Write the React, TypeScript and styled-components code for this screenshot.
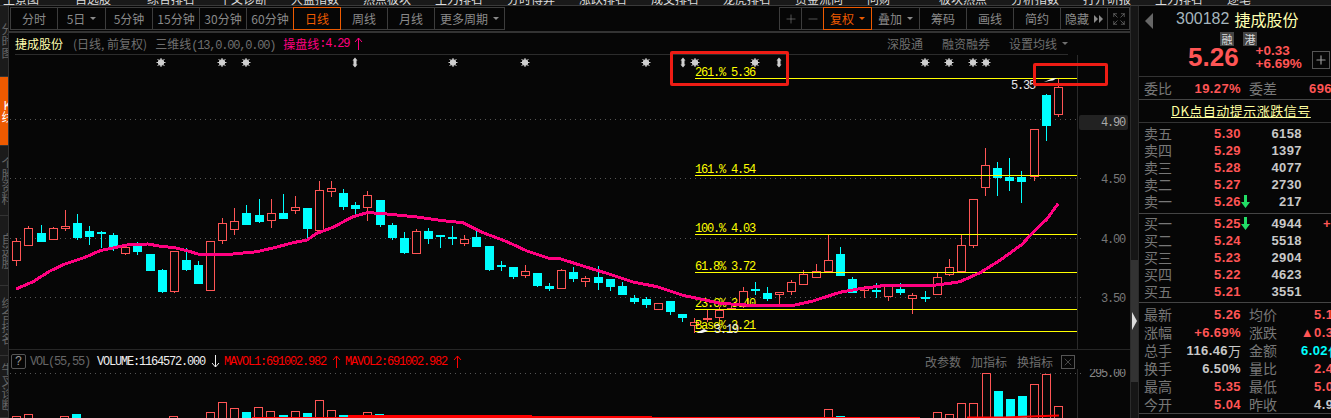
import React from 'react';
import styled, { createGlobalStyle } from 'styled-components';
import { Expand, Minus, Plus, X } from 'lucide-react';

const CJK = '"Noto Sans CJK SC", "Liberation Sans", sans-serif';
const NUM = '"Liberation Sans", "Noto Sans CJK SC", sans-serif';
const MONO = '"Liberation Mono", "Noto Sans CJK SC", monospace';

const RED = '#ff5555';
const CYAN = '#00ffff';
const PINK = '#ff0080';
const YELLOW = '#ffff00';

const GlobalStyle = createGlobalStyle`
  html, body {
    margin: 0;
    padding: 0;
    background: #060606;
  }
`;

const Screen = styled.div`
  position: relative;
  width: 1331px;
  height: 418px;
  overflow: hidden;
  background: #060606;
  font-family: ${CJK};
  color: #888;
`;

const TopMenu = styled.div`
  display: flex;
  align-items: flex-end;
  height: 5px;
  padding-left: 3px;
  overflow: hidden;
  background: #191919;
  border-bottom: 1px solid #3a3a3a;
`;

const TopMenuItem = styled.span`
  flex: none;
  width: 72px;
  font-size: 12px;
  line-height: 12px;
  color: #ddd;
  white-space: nowrap;
`;

const Body = styled.div`
  display: flex;
  height: 412px;
`;

const Rail = styled.div`
  flex: none;
  display: flex;
  flex-direction: column;
  width: 8px;
  overflow: hidden;
  background: #1b1b1b;
  border-right: 1px solid #333;
`;

const RailTab = styled.div<{ $active?: boolean; $h: number }>`
  flex: none;
  display: flex;
  align-items: center;
  justify-content: center;
  width: 14px;
  height: ${(p) => p.$h}px;
  overflow: hidden;
  box-sizing: border-box;
  background: ${(p) => (p.$active ? '#ee5a00' : 'transparent')};
  border-bottom: 1px solid #333;
  color: ${(p) => (p.$active ? '#fff' : '#666')};
  font-size: 12px;
  line-height: 12px;
  writing-mode: vertical-rl;
  text-orientation: upright;
`;

const Main = styled.div`
  flex: none;
  display: flex;
  flex-direction: column;
  width: 1121px;
`;

const Toolbar = styled.div`
  display: flex;
  box-sizing: border-box;
  height: 27px;
  padding: 1px 0 1px 1px;
  border-bottom: 2px solid #333;
`;

const ToolGroup = styled.div<{ $push?: boolean }>`
  display: flex;
  margin-left: ${(p) => (p.$push ? 'auto' : '0')};
`;

const ToolButton = styled.div<{ $w: number; $active?: boolean }>`
  flex: none;
  display: flex;
  align-items: center;
  justify-content: center;
  gap: 5px;
  box-sizing: border-box;
  width: ${(p) => p.$w}px;
  height: 23px;
  margin-left: -1px;
  border: 1px solid ${(p) => (p.$active ? '#ee5a00' : '#3c3c3c')};
  color: ${(p) => (p.$active ? '#ee5a00' : '#8a8a8a')};
  font-size: 12px;
  position: relative;
  z-index: ${(p) => (p.$active ? 1 : 0)};
  &:first-child {
    margin-left: 0;
  }
`;

const Caret = styled.i<{ $c?: string }>`
  display: block;
  width: 0;
  height: 0;
  border-left: 3px solid transparent;
  border-right: 3px solid transparent;
  border-top: 3px solid ${(p) => p.$c ?? '#8a8a8a'};
`;

const ChartHead = styled.div`
  display: flex;
  align-items: center;
  height: 22px;
  box-sizing: border-box;
  margin: 0 62px 0 6px;
  border-bottom: 1px solid #2c2c2c;
  font-size: 12px;
  white-space: nowrap;
`;

const StockName = styled.span`
  color: #ffffb0;
  margin-right: 10px;
`;

const HeadNote = styled.span`
  color: #6f6f6f;
  margin-right: 8px;
`;

const MonoNote = styled.span`
  font-family: ${MONO};
  letter-spacing: -1.2px;
  font-size: 12px;
`;

const HeadSignal = styled.span`
  display: flex;
  align-items: center;
  color: ${PINK};
  svg {
    margin-left: 5px;
  }
`;

const HeadLinks = styled.div`
  display: flex;
  align-items: center;
  margin-left: auto;
  gap: 19px;
  color: #6f6f6f;
`;

const LinkCaret = styled.span`
  display: flex;
  align-items: center;
  gap: 5px;
`;

const ChartSvg = styled.svg`
  display: block;
  flex: none;
`;

const ChartText = styled.text<{ $c: string }>`
  fill: ${(p) => p.$c};
  font-family: ${MONO};
  font-size: 12px;
  letter-spacing: -1.2px;
`;

const VolHead = styled.div`
  display: flex;
  align-items: center;
  height: 20px;
  box-sizing: border-box;
  padding: 4px 0 0 2px;
  border-top: 1px solid #262626;
  font-size: 12px;
  white-space: nowrap;
`;

const HelpBox = styled.span`
  display: flex;
  align-items: center;
  justify-content: center;
  box-sizing: border-box;
  width: 15px;
  height: 15px;
  margin-right: 4px;
  border: 1px solid #555;
  border-radius: 2px;
  font-family: ${MONO};
  color: #999;
`;

const VolText = styled.span<{ $c: string; $gap?: number }>`
  display: flex;
  align-items: center;
  gap: 6px;
  margin-right: ${(p) => p.$gap ?? 4}px;
  color: ${(p) => p.$c};
  font-family: ${MONO};
  font-size: 12px;
  letter-spacing: -1.2px;
`;

const VolLinks = styled.div`
  display: flex;
  align-items: center;
  gap: 10px;
  margin-left: auto;
  margin-right: 55px;
  color: #6f6f6f;
`;

const CloseBox = styled.span`
  display: flex;
  align-items: center;
  justify-content: center;
  box-sizing: border-box;
  width: 14px;
  height: 14px;
  margin-left: -2px;
  border: 1px solid #555;
  color: #888;
`;

const ScrollStrip = styled.div`
  flex: none;
  width: 7px;
  padding-top: 254px;
  background: #161616;
  border-left: 1px solid #2b2b2b;
  border-right: 1px solid #2b2b2b;
`;

const ScrollThumb = styled.div`
  display: flex;
  align-items: center;
  justify-content: center;
  height: 122px;
  background: #333;
`;

const ScrollArrow = styled.i`
  display: block;
  width: 0;
  height: 0;
  border-top: 9px solid transparent;
  border-bottom: 9px solid transparent;
  border-left: 5px solid #ddd;
`;

const Quote = styled.div`
  flex: none;
  width: 192px;
  overflow: hidden;
  font-family: ${NUM};
`;

const QuoteHead = styled.div`
  height: 71px;
  box-sizing: border-box;
  border-bottom: 1px solid #333;
`;

const CodeRow = styled.div`
  display: flex;
  align-items: center;
  height: 26px;
  padding-left: 6px;
`;

const BackArrow = styled.i`
  display: block;
  width: 0;
  height: 0;
  margin: 4px 23px 0 0;
  border-top: 8px solid transparent;
  border-bottom: 8px solid transparent;
  border-right: 8px solid #666;
`;

const Code = styled.span`
  font-size: 16px;
  color: #a5b5bd;
  margin-right: 5px;
`;

const QuoteName = styled.span`
  font-family: ${CJK};
  font-size: 16px;
  color: #ffffb0;
`;

const BadgeRow = styled.div`
  display: flex;
  gap: 9px;
  height: 15px;
  padding-left: 81px;
`;

const Badge = styled.span`
  display: flex;
  align-items: center;
  justify-content: center;
  width: 14px;
  height: 14px;
  background: #444;
  color: #ddd;
  font-family: ${CJK};
  font-size: 11px;
`;

const PriceRow = styled.div`
  display: flex;
  align-items: center;
  height: 20px;
  padding-left: 49px;
`;

const Price = styled.span`
  font-size: 26px;
  font-weight: bold;
  color: ${RED};
  margin-right: 17px;
`;

const Change = styled.div`
  font-size: 13.5px;
  font-weight: bold;
  line-height: 13px;
  color: ${RED};
`;

const PlusBox = styled.span`
  display: flex;
  align-items: center;
  justify-content: center;
  width: 16px;
  height: 16px;
  margin: 5px 1px 0 auto;
  border: 1px solid #555;
  color: #999;
`;

const Section = styled.div<{ $pt: number; $pb: number }>`
  box-sizing: border-box;
  padding: ${(p) => p.$pt}px 0 ${(p) => p.$pb}px 5px;
  border-bottom: 1px solid #444;
`;

const StatRow = styled.div<{ $h: number }>`
  display: grid;
  grid-template-columns: 44px 53px 8px 44px 48px;
  align-items: center;
  height: ${(p) => p.$h}px;
  white-space: nowrap;
`;

const BookRow = styled.div`
  display: grid;
  grid-template-columns: 44px 53px 14px 47px auto;
  align-items: center;
  height: 17px;
  white-space: nowrap;
`;

const Label = styled.span<{ $col?: number }>`
  grid-column: ${(p) => p.$col ?? 1};
  font-family: ${CJK};
  font-size: 14px;
  color: #777;
  line-height: 17px;
`;

const Value = styled.span<{ $c?: string; $col?: number; $inset?: number }>`
  grid-column: ${(p) => p.$col ?? 'auto'};
  justify-self: end;
  display: flex;
  align-items: center;
  margin-right: ${(p) => p.$inset ?? 0}px;
  font-size: 13px;
  font-weight: bold;
  letter-spacing: 0.4px;
  line-height: 17px;
  color: ${(p) => p.$c ?? '#c8c8c8'};
`;

const UnitGlyph = styled.span`
  font-family: ${CJK};
  font-weight: normal;
  font-size: 13px;
  letter-spacing: 0;
`;

const DkRow = styled.div`
  height: 23px;
  box-sizing: border-box;
  padding: 3px 0 0 32px;
  border-bottom: 1px solid #333;
  font-family: ${CJK};
  font-size: 13px;
  letter-spacing: 0.5px;
  line-height: 16px;
  color: #ffffa0;
  text-decoration: underline;
`;

const RedBox = styled.div<{ $x: number; $y: number; $w: number; $h: number }>`
  position: absolute;
  left: ${(p) => p.$x}px;
  top: ${(p) => p.$y}px;
  width: ${(p) => p.$w}px;
  height: ${(p) => p.$h}px;
  box-sizing: border-box;
  border: 3px solid #ee1c14;
  border-radius: 2px;
`;

// [kind, body top, body bottom, wick top, wick bottom], page coords
const candles: [string, number, number, number, number][] = [
  ['r', 241, 259.5, 238, 266], ['r', 228, 244.5, 226, 244.5], ['c', 233, 242, 225, 242], ['r', 228, 238.5, 227, 238.5],
  ['r', 226, 228, 210, 231], ['c', 223, 238, 214, 240], ['c', 231, 237, 226, 245], ['c', 232, 234, 231, 248],
  ['c', 235, 249, 233, 251], ['r', 247, 253, 247, 255], ['c', 246, 252, 242, 255], ['c', 254, 271, 254, 271],
  ['c', 270, 292, 269, 293], ['r', 251, 290.5, 251, 293], ['c', 260, 270, 248, 271], ['c', 265, 284, 261, 284],
  ['r', 241, 290, 241, 291], ['r', 223, 240, 218, 244], ['r', 221, 229, 208, 235], ['c', 213, 225, 205, 225],
  ['c', 215, 222, 199, 223], ['r', 213, 220, 199, 228], ['c', 213, 219, 194, 219], ['r', 207, 210, 196, 214],
  ['c', 208, 229, 208, 238], ['r', 190, 230, 181, 230], ['r', 188, 191, 181, 197], ['c', 193, 207, 189, 210],
  ['c', 205, 209, 202, 215], ['r', 195, 207, 191, 221], ['c', 200, 225, 200, 227], ['c', 225, 238, 223, 240],
  ['c', 238, 253, 232, 254], ['r', 231, 253, 229, 253], ['c', 231, 239, 228, 244], ['c', 235, 237, 235, 248],
  ['c', 237, 239, 226, 245], ['r', 239, 243, 235, 246], ['c', 237, 247, 231, 247], ['c', 246, 270, 246, 271],
  ['c', 265, 267, 261, 271], ['c', 267, 277, 267, 279], ['r', 271, 275, 265, 278], ['c', 273, 286, 273, 287],
  ['c', 286, 289, 283, 291], ['r', 270, 288, 269, 289], ['c', 272, 279, 267, 282], ['r', 278, 281, 276, 287],
  ['c', 277, 283, 266, 290], ['c', 279, 287, 279, 291], ['c', 286, 295, 282, 295], ['c', 298, 302, 295, 304],
  ['c', 299, 305, 297, 308], ['r', 303, 309, 303, 309], ['c', 301, 312, 301, 315], ['c', 314, 318, 314, 322],
  ['r', 322, 325, 318, 333], ['r', 318, 319, 310, 322], ['r', 310, 317, 307, 321], ['r', 308, 309, 303, 310],
  ['r', 291, 306, 287, 308], ['c', 289, 291, 282, 295], ['c', 293, 299, 287, 301], ['r', 292, 294, 292, 304],
  ['r', 282, 291, 280, 295], ['r', 274, 284, 270, 284], ['r', 271, 277, 264, 277], ['r', 260, 271, 234, 272],
  ['c', 254, 276, 247, 276], ['c', 279, 293, 277, 293], ['r', 288, 290, 286, 298], ['c', 290, 292, 283, 298],
  ['r', 285, 296, 285, 301], ['c', 289, 293, 283, 295], ['r', 295, 298, 293, 314], ['c', 297, 298, 291, 302],
  ['r', 277, 294, 273, 295], ['r', 267, 274, 259, 276], ['r', 245, 271, 235, 272], ['r', 199, 245, 199, 248],
  ['r', 165, 187, 148, 196], ['c', 168, 178, 162, 196], ['c', 177, 181, 158, 191], ['c', 177, 182, 171, 203],
  ['r', 129, 176, 129, 181], ['c', 95, 126, 94, 141], ['r', 87, 114, 79, 117],
];

const candleX = (i: number) => Math.round(16.3 + 12.11 * i);

const maLine =
  '16,289 33,281.7 50,271 65,264 85,257.3 100,250.7 113,248 130,244.3 148,244 163,246.7 173,247.3 187,250.7 198,254 233,254 257,251.7 277,247 293,242.7 307,240 317,233.3 333,227.3 353,216.7 367,212.7 380,213.3 400,215.3 417,217 443,220.7 463,222.7 483,232.7 507,241.7 527,251 550,258.7 560,258.7 587,267.3 607,273.3 633,282 657,286.7 683,295.3 720,303.3 757,305.7 792,305.7 813,301 840,292.3 860,288.7 883,285.7 930,285.7 947,283.7 960,281.7 980,272.7 1000,260.3 1022,244.3 1033,232.3 1047,219 1058,203.7';

const fiboLevels = [
  { y: 78, text: '261.% 5.36' },
  { y: 175, text: '161.% 4.54' },
  { y: 234, text: '100.% 4.03' },
  { y: 272, text: '61.8% 3.72' },
  { y: 309, text: '23.6% 3.40' },
  { y: 331, text: 'Base% 3.21' },
];

const stars = [161, 222, 246, 453, 525, 646, 695, 755, 925, 949, 973, 986];
const updowns = [355, 683, 779];

const axisLabels = [
  { y: 178.5, text: '4.50' },
  { y: 238.5, text: '4.00' },
  { y: 297.5, text: '3.50' },
];

// [x, top, colour]
const volBars: [number, number, string][] = [
  [16, 416, 'r'], [28, 414, 'r'], [64, 416, 'r'], [76, 414, 'c'], [173, 416, 'r'], [210, 412, 'r'], [222, 402, 'r'],
  [234, 408, 'r'], [246, 412, 'c'], [258, 407, 'r'], [270, 411, 'r'], [283, 415, 'c'], [295, 411, 'r'], [307, 413, 'c'],
  [319, 400, 'r'], [331, 410, 'r'], [343, 415, 'c'], [367, 412, 'r'], [379, 414, 'c'], [828, 409, 'r'], [840, 416, 'c'],
  [937, 412, 'r'], [949, 414, 'r'], [961, 403, 'r'], [973, 403, 'r'], [986, 373, 'r'], [998, 391, 'c'], [1010, 399, 'c'],
  [1022, 396, 'c'], [1034, 384, 'r'], [1046, 374, 'r'], [1058, 406, 'r'],
];

const Star: React.FC<{ x: number; y: number }> = ({ x, y }) => (
  <g stroke="#cfcfcf" strokeWidth="1">
    <circle cx={x} cy={y} r="2.8" fill="#cfcfcf" />
    <line x1={x - 4.5} y1={y} x2={x + 4.5} y2={y} />
    <line x1={x} y1={y - 4.5} x2={x} y2={y + 4.5} />
    <line x1={x - 3.5} y1={y - 3.5} x2={x + 3.5} y2={y + 3.5} />
    <line x1={x - 3.5} y1={y + 3.5} x2={x + 3.5} y2={y - 3.5} />
  </g>
);

const UpDown: React.FC<{ x: number; y: number }> = ({ x, y }) => (
  <path
    d={`M${x} ${y - 5} L${x + 2.5} ${y - 2} L${x + 1.5} ${y - 2} L${x + 1.5} ${y + 2} L${x + 2.5} ${y + 2} L${x} ${y + 5} L${x - 2.5} ${y + 2} L${x - 1.5} ${y + 2} L${x - 1.5} ${y - 2} L${x - 2.5} ${y - 2} Z`}
    fill="#cfcfcf"
  />
);

const ThinArrow: React.FC<{ color: string; down?: boolean }> = ({ color, down }) => (
  <svg width="9" height="13" viewBox="0 0 9 13" fill="none" stroke={color} strokeWidth="1">
    {down ? <path d="M4.5 0V12M1 8L4.5 12L8 8" /> : <path d="M4.5 1V13M1 5L4.5 1L8 5" />}
  </svg>
);

const GreenDown: React.FC = () => (
  <svg width="9" height="13" viewBox="0 0 9 13">
    <path d="M3 0H6V7H9L4.5 13L0 7H3Z" fill="#22dd66" />
  </svg>
);

const SkipRight: React.FC = () => (
  <svg width="9" height="8" viewBox="0 0 9 8" fill="#8a8a8a">
    <path d="M0 0L4 4L0 8ZM5 0L9 4L5 8Z" />
  </svg>
);

const MainChart: React.FC = () => (
  <ChartSvg width="1121" height="294" viewBox="9 55 1121 294">
    <g stroke="#555" strokeWidth="1" strokeDasharray="1 4">
      {[119.5, 178.5, 238.5, 297.5].map((y) => (
        <line key={y} x1="10" y1={y} x2="1081" y2={y} />
      ))}
    </g>
    <line x1="1077.5" y1="55" x2="1077.5" y2="349" stroke="#2a2a2a" />
    <rect x="1079" y="115" width="49" height="15" rx="2" fill="#222" />
    <ChartText $c="#aaa" x="1101" y="126">4.90</ChartText>
    {axisLabels.map((a) => (
      <ChartText key={a.y} $c="#777" x="1101" y={a.y + 4}>{a.text}</ChartText>
    ))}

    {stars.map((x) => (
      <Star key={x} x={x} y={62.5} />
    ))}
    {updowns.map((x) => (
      <UpDown key={x} x={x} y={62.5} />
    ))}

    <g shapeRendering="crispEdges">
      {candles.map(([kind, top, bot, wickTop, wickBot], i) => {
        const x = candleX(i);
        const color = kind === 'r' ? RED : CYAN;
        return (
          <g key={i}>
            <line x1={x + 0.5} y1={wickTop} x2={x + 0.5} y2={wickBot} stroke={color} />
            {kind === 'r' ? (
              <rect x={x - 3.5} y={Math.round(top) + 0.5} width="8" height={Math.max(Math.round(bot - top), 1)} fill="#060606" stroke={color} />
            ) : (
              <rect x={x - 4} y={top} width="9" height={Math.max(bot - top, 2)} fill={color} />
            )}
          </g>
        );
      })}
    </g>

    {fiboLevels.map((f) => (
      <g key={f.y}>
        <line x1="695" y1={f.y + 0.5} x2="1077" y2={f.y + 0.5} stroke={YELLOW} shapeRendering="crispEdges" />
        <ChartText $c={YELLOW} x="695" y={f.y - 2}>{f.text}</ChartText>
      </g>
    ))}

    <polyline points={maLine} fill="none" stroke={PINK} strokeWidth="3" shapeRendering="crispEdges" />

    <ChartText $c="#e8e8e8" x="1011" y="89">5.35</ChartText>
    <path d="M1044 82L1052 78.5L1057 78L1053 80.5L1049 81Z" fill="#f4f4f4" />
    <ChartText $c="#e8e8e8" x="714" y="333">3.19</ChartText>
    <path d="M696 333L704 329L708 331L702 333Z" fill="#f4f4f4" />
  </ChartSvg>
);

const VolChart: React.FC = () => (
  <ChartSvg width="1121" height="49" viewBox="9 369 1121 49">
    <line x1="10" y1="373.5" x2="1081" y2="373.5" stroke="#555" strokeDasharray="1 4" />
    <line x1="1077.5" y1="369" x2="1077.5" y2="418" stroke="#2a2a2a" />
    <ChartText $c="#888" x="1089" y="377">295.00</ChartText>
    <g shapeRendering="crispEdges">
      {volBars.map(([x, top, kind]) =>
        kind === 'r' ? (
          <rect key={x} x={x - 3.5} y={top + 0.5} width="8" height={46} fill="#060606" stroke={RED} />
        ) : (
          <rect key={x} x={x - 4} y={top} width="9" height={46} fill={CYAN} />
        ),
      )}
    </g>
    <g stroke="#ff0000" fill="none">
      <path d="M252 417.5H348" strokeWidth="1" />
      <path d="M348 416.5H532" strokeWidth="3" />
      <path d="M532 417H652" strokeWidth="2" />
      <path d="M652 417.5H920" strokeWidth="1" />
      <path d="M967 417.5H1004L1030 416.5L1059 415.5" strokeWidth="2" />
    </g>
  </ChartSvg>
);

const topMenu = ['主景图', '自选股', '综合排名', '牛叉诊断', '大盘指数', '热点板块', '主力排名', '分时博弈', '涨跌排名', '成交排名', '龙虎排名', '资金流向', '问财', '板块热点', '分析指数', '打开研报', '主力排名', '逐笔'];

const asks = [
  ['卖五', '5.30', '6158'],
  ['卖四', '5.29', '1397'],
  ['卖三', '5.28', '4077'],
  ['卖二', '5.27', '2730'],
  ['卖一', '5.26', '217'],
];

const bids = [
  ['买一', '5.25', '4944'],
  ['买二', '5.24', '5518'],
  ['买三', '5.23', '2904'],
  ['买四', '5.22', '4623'],
  ['买五', '5.21', '3551'],
];

const stats: { a: string; av: React.ReactNode; ac?: string; b: string; bv: React.ReactNode; bc?: string }[] = [
  { a: '最新', av: '5.26', ac: RED, b: '均价', bv: '5.15', bc: RED },
  { a: '涨幅', av: '+6.69%', ac: RED, b: '涨跌', bv: '▲0.33', bc: RED },
  { a: '总手', av: <>116.46<UnitGlyph>万</UnitGlyph></>, b: '金额', bv: <>6.02<UnitGlyph>亿</UnitGlyph></>, bc: CYAN },
  { a: '换手', av: '6.50%', b: '量比', bv: '2.41', bc: RED },
  { a: '最高', av: '5.35', ac: RED, b: '最低', bv: '5.04', bc: RED },
  { a: '今开', av: '5.04', ac: RED, b: '昨收', bv: '4.93' },
];

const App: React.FC = () => (
  <Screen>
    <GlobalStyle />
    <TopMenu>
      {topMenu.map((t, i) => (
        <TopMenuItem key={i}>{t}</TopMenuItem>
      ))}
    </TopMenu>
    <Body>
      <Rail>
        <RailTab $h={71}>分时图</RailTab>
        <RailTab $h={69} $active>K线</RailTab>
        <RailTab $h={70}>个股资料</RailTab>
        <RailTab $h={70}>自选股</RailTab>
        <RailTab $h={70}>综合排名</RailTab>
        <RailTab $h={62}>牛叉诊断</RailTab>
      </Rail>
      <Main>
        <Toolbar>
          <ToolGroup>
            <ToolButton $w={48}>分时</ToolButton>
            <ToolButton $w={49}>5日<Caret /></ToolButton>
            <ToolButton $w={48}>5分钟</ToolButton>
            <ToolButton $w={48}>15分钟</ToolButton>
            <ToolButton $w={48}>30分钟</ToolButton>
            <ToolButton $w={48}>60分钟</ToolButton>
            <ToolButton $w={48} $active>日线</ToolButton>
            <ToolButton $w={48}>周线</ToolButton>
            <ToolButton $w={48}>月线</ToolButton>
            <ToolButton $w={71}>更多周期<Caret /></ToolButton>
          </ToolGroup>
          <ToolGroup $push>
            <ToolButton $w={23}><Plus size={14} strokeWidth={1} /></ToolButton>
            <ToolButton $w={23}><Minus size={14} strokeWidth={1} /></ToolButton>
            <ToolButton $w={49} $active>复权<Caret $c="#ee5a00" /></ToolButton>
            <ToolButton $w={49}>叠加<Caret /></ToolButton>
            <ToolButton $w={48}>筹码</ToolButton>
            <ToolButton $w={48}>画线</ToolButton>
            <ToolButton $w={48}>简约</ToolButton>
            <ToolButton $w={48}>隐藏<SkipRight /></ToolButton>
            <ToolButton $w={23}><Expand size={14} strokeWidth={1} /></ToolButton>
          </ToolGroup>
        </Toolbar>
        <ChartHead>
          <StockName>捷成股份</StockName>
          <HeadNote>(日线, 前复权)</HeadNote>
          <HeadNote>三维线<MonoNote>(13,0.00,0.00)</MonoNote></HeadNote>
          <HeadSignal>操盘线<MonoNote>:4.29</MonoNote><ThinArrow color={PINK} /></HeadSignal>
          <HeadLinks>
            <span>深股通</span>
            <span>融资融券</span>
            <LinkCaret>设置均线<Caret $c="#6f6f6f" /></LinkCaret>
          </HeadLinks>
        </ChartHead>
        <MainChart />
        <VolHead>
          <HelpBox>?</HelpBox>
          <VolText $c="#666" $gap={7}>VOL(55,55)</VolText>
          <VolText $c="#eee">VOLUME:1164572.000<ThinArrow color="#eee" down /></VolText>
          <VolText $c="#ff0000">MAVOL1:691002.982<ThinArrow color="#ff0000" /></VolText>
          <VolText $c="#ff0000">MAVOL2:691002.982<ThinArrow color="#ff0000" /></VolText>
          <VolLinks>
            <span>改参数</span>
            <span>加指标</span>
            <span>换指标</span>
            <CloseBox><X size={12} strokeWidth={1} /></CloseBox>
          </VolLinks>
        </VolHead>
        <VolChart />
      </Main>
      <ScrollStrip>
        <ScrollThumb>
          <ScrollArrow />
        </ScrollThumb>
      </ScrollStrip>
      <Quote>
        <QuoteHead>
          <CodeRow>
            <BackArrow />
            <Code>300182</Code>
            <QuoteName>捷成股份</QuoteName>
          </CodeRow>
          <BadgeRow>
            <Badge>融</Badge>
            <Badge>港</Badge>
          </BadgeRow>
          <PriceRow>
            <Price>5.26</Price>
            <Change>
              +0.33
              <br />
              +6.69%
            </Change>
            <PlusBox><Plus size={14} strokeWidth={2} /></PlusBox>
          </PriceRow>
        </QuoteHead>
        <Section $pt={3} $pb={3}>
          <StatRow $h={16}>
            <Label>委比</Label>
            <Value $c={RED} $col={2}>19.27%</Value>
            <Label $col={4}>委差</Label>
            <Value $c={RED} $col={5} $inset={9}>696</Value>
          </StatRow>
        </Section>
        <DkRow>DK点自动提示涨跌信号</DkRow>
        <Section $pt={2} $pb={3}>
          {asks.map(([label, price, vol]) => (
            <BookRow key={label}>
              <Label>{label}</Label>
              <Value $c={RED} $col={2}>{price}</Value>
              {label === '卖一' ? <GreenDown /> : <span />}
              <Value $col={4}>{vol}</Value>
            </BookRow>
          ))}
        </Section>
        <Section $pt={1} $pb={2}>
          {bids.map(([label, price, vol]) => (
            <BookRow key={label}>
              <Label>{label}</Label>
              <Value $c={RED} $col={2}>{price}</Value>
              {label === '买一' ? <GreenDown /> : <span />}
              <Value $col={4}>{vol}</Value>
              {label === '买一' && <Value $c={RED} $col={5}>+</Value>}
            </BookRow>
          ))}
        </Section>
        <Section $pt={2} $pb={0}>
          {stats.map((s) => (
            <StatRow key={s.a} $h={18}>
              <Label>{s.a}</Label>
              <Value $c={s.ac} $col={2}>{s.av}</Value>
              <Label $col={4}>{s.b}</Label>
              <Value $c={s.bc} $col={5}>{s.bv}</Value>
            </StatRow>
          ))}
        </Section>
      </Quote>
    </Body>
    <RedBox $x={670} $y={51} $w={119} $h={35} />
    <RedBox $x={1033} $y={63} $w={75} $h={23} />
  </Screen>
);

export default App;
